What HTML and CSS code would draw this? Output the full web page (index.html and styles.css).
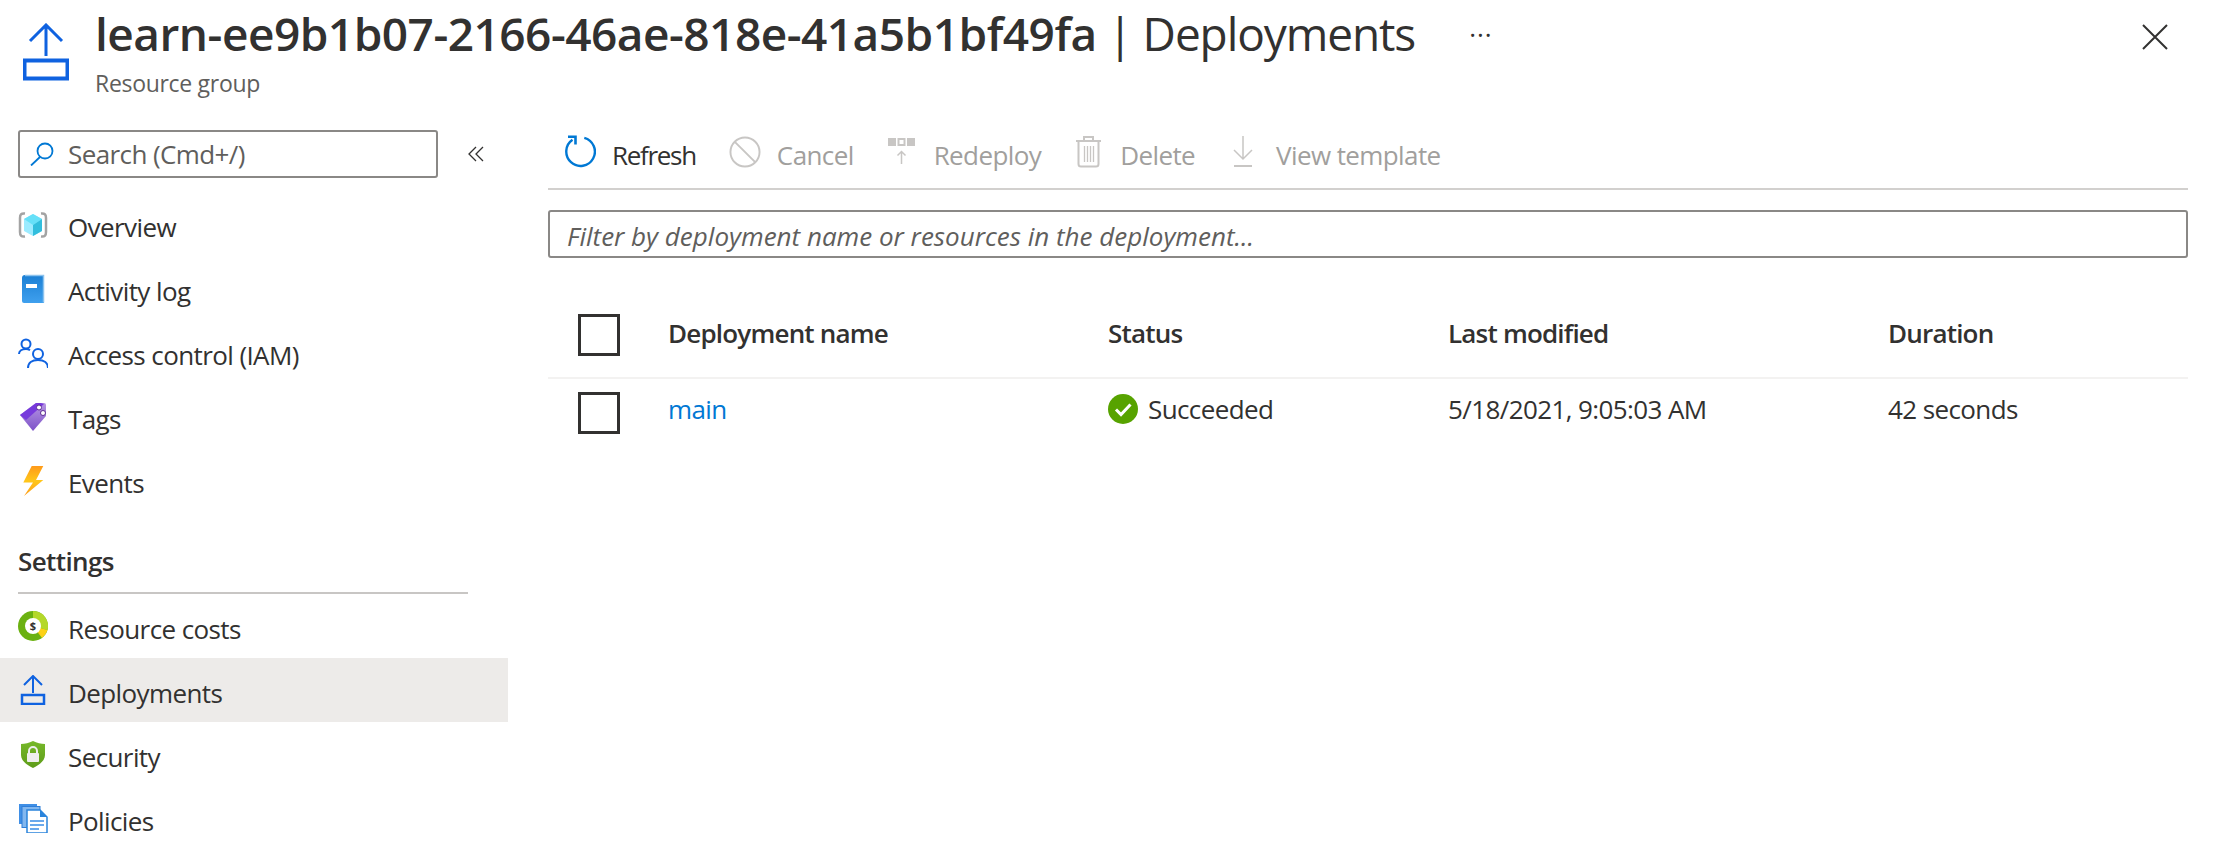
FILE: index.html
```html
<!DOCTYPE html>
<html lang="en">
<head>
   <meta charset="UTF-8">
   <title>Deployments</title>
   <link rel="stylesheet" href="styles.css">
</head>
<body class="body">
   <header class="page-header">
      <svg class="header-icon" width="46" height="58" viewBox="0 0 46 58"><path d="M23 33V2M7 18L23 2l16 16" fill="none" stroke="#0f62e0" stroke-width="3"/><rect x="1.500" y="37.500" width="43" height="18" fill="none" stroke="#0f62e0" stroke-width="4"/></svg>
      <div class="header-text">
         <h1 class="title"><b>learn-ee9b1b07-2166-46ae-818e-41a5b1bf49fa</b> | Deployments</h1>
         <div class="subtitle">Resource group</div>
      </div>
      <div class="more">···</div>
      <svg class="close" width="26" height="26" viewBox="0 0 26 26"><path d="M1 1l24 24M25 1L1 25" stroke="#323130" stroke-width="2" fill="none"/></svg>
   </header>

   <div class="layout">
      <aside class="sidebar">
         <div class="search-row">
            <div class="search-box">
               <svg width="24" height="24" viewBox="0 0 24 24"><circle cx="15" cy="9" r="7.500" fill="none" stroke="#0078d4" stroke-width="1.800"/><path d="M10 15L1 23.500" stroke="#0078d4" stroke-width="1.800"/></svg>
               <span>Search (Cmd+/)</span>
            </div>
            <svg class="collapse" width="16" height="16" viewBox="0 0 16 16"><path d="M8 1L1 8l7 7M15 1L8 8l7 7" fill="none" stroke="#323130" stroke-width="1.300"/></svg>
         </div>

         <nav class="menu">
            <a class="menu-item">
               <svg class="menu-icon" width="30" height="30" viewBox="0 0 30 30"><path d="M7 3.500C3 3 2 5 2 8v14c0 3 1 5 5 4.500M23 3.500C27 3 28 5 28 8v14c0 3-1 5-5 4.500" fill="none" stroke="#a3a3a3" stroke-width="2.500"/><path d="M15 4l9 5v12l-9 5-9-5V9z" fill="#9cebff"/><path d="M15 4l9 5-9 6-9-6z" fill="#66e0f8"/><path d="M24 9v12l-9 5V15z" fill="#32bedd"/></svg>
               <span>Overview</span>
            </a>
            <a class="menu-item">
               <svg class="menu-icon" width="30" height="30" viewBox="0 0 30 30"><defs><linearGradient id="book" x1="0" y1="0" x2="0" y2="1"><stop offset="0" stop-color="#1b7fd4"/><stop offset="1" stop-color="#3fa0ee"/></linearGradient></defs><path d="M4 4a3 3 0 0 1 3-3h19v28H6a2 2 0 0 1-2-2z" fill="url(#book)"/><path d="M7 1.500h18.500V28.500" fill="none" stroke="#8cc3ee" stroke-width="1.500"/><rect x="8" y="10" width="11" height="4" fill="#fff"/></svg>
               <span>Activity log</span>
            </a>
            <a class="menu-item">
               <svg class="menu-icon" width="30" height="30" viewBox="0 0 30 30"><g fill="none" stroke="#0f62e0" stroke-width="2"><circle cx="8" cy="6" r="4.500"/><path d="M1 16c0-3 3-5 7-5 2 0 3 .5 4 1.200"/><circle cx="20" cy="16" r="5"/><path d="M10 30c0-5 4-8 10-8s10 3 10 8"/></g></svg>
               <span>Access control (IAM)</span>
            </a>
            <a class="menu-item">
               <svg class="menu-icon" width="30" height="30" viewBox="0 0 30 30"><defs><linearGradient id="tag" x1="0" y1="0" x2="0" y2="1"><stop offset="0" stop-color="#b796e4"/><stop offset="1" stop-color="#7d52c8"/></linearGradient></defs><path d="M2 13L18 1h8a2 2 0 0 1 2 2v11L15 29z" fill="url(#tag)"/><path d="M2 13L18 1h5l3 1L8 18z" fill="#773adc"/><circle cx="21" cy="5.500" r="2.500" fill="#fff" stroke="#5c2d91"/><circle cx="25" cy="11" r="2.500" fill="#fff" stroke="#5c2d91"/></svg>
               <span>Tags</span>
            </a>
            <a class="menu-item">
               <svg class="menu-icon" width="30" height="30" viewBox="0 0 30 30"><defs><linearGradient id="bolt" x1="0" y1="0" x2="0" y2="1"><stop offset="0" stop-color="#ff9a1a"/><stop offset=".5" stop-color="#ffc71a"/><stop offset="1" stop-color="#ff9c1a"/></linearGradient></defs><path d="M13.700 0H25.300L18 14h7.300L6 30l9-13.500H5.300z" fill="url(#bolt)"/></svg>
               <span>Events</span>
            </a>
         </nav>

         <div class="menu-heading">Settings</div>
         <div class="menu-rule"></div>

         <nav class="menu menu-settings">
            <a class="menu-item">
               <svg class="menu-icon" width="30" height="30" viewBox="0 0 30 30"><circle cx="15" cy="15" r="15" fill="#6bb111"/><path d="M15 15V0a15 15 0 0 1 14.500 19z" fill="#b4d82a"/><path d="M15 15l14.500 4A15 15 0 0 1 24 27z" fill="#fcd116"/><circle cx="15" cy="15" r="8" fill="#fff"/><text class="coin" x="15" y="19" text-anchor="middle">$</text></svg>
               <span>Resource costs</span>
            </a>
            <a class="menu-item active">
               <svg class="menu-icon" width="30" height="30" viewBox="0 0 30 30"><path d="M15 18V1M6 10l9-9 9 9" fill="none" stroke="#0f62e0" stroke-width="2"/><rect x="4" y="20" width="22" height="9" fill="none" stroke="#0f62e0" stroke-width="2.500"/></svg>
               <span>Deployments</span>
            </a>
            <a class="menu-item">
               <svg class="menu-icon" width="30" height="30" viewBox="0 0 30 30"><defs><linearGradient id="shield" x1="0" y1="0" x2="0" y2="1"><stop offset="0" stop-color="#76b82a"/><stop offset="1" stop-color="#5e9c1a"/></linearGradient></defs><path d="M3 5c4 0 8-1 12-3 4 2 8 3 12 3v11c0 6-6 10-12 13C9 26 3 22 3 16z" fill="url(#shield)"/><path d="M11 14v-2a4 4 0 0 1 8 0v2" fill="none" stroke="#eeeeee" stroke-width="2"/><rect x="9" y="14" width="12" height="9" rx="1" fill="#eeeeee"/></svg>
               <span>Security</span>
            </a>
            <a class="menu-item">
               <svg class="menu-icon" width="30" height="30" viewBox="0 0 30 30"><rect x="1" y="1" width="18" height="20" fill="#3f8fe6"/><rect x="4" y="3.500" width="18" height="21" fill="#82b7ef" stroke="#2f7fd8"/><path d="M9 7h13l7 7v16H9z" fill="#fff" stroke="#2a84dc" stroke-width="1.500"/><path d="M22 7l7 7h-7z" fill="#2a84dc"/><path d="M12 18h14M12 22h14M12 26h9" stroke="#6aa9ec" stroke-width="1.800"/></svg>
               <span>Policies</span>
            </a>
         </nav>
      </aside>

      <main class="content">
         <div class="toolbar">
            <div class="tool">
               <svg width="32" height="34" viewBox="0 0 32 34"><path d="M20.300 2.800A14.300 14.300 0 1 1 8.500 4.800" fill="none" stroke="#0078d4" stroke-width="2.400"/><path d="M4 1.800h7.500V9.500" fill="none" stroke="#0078d4" stroke-width="2.600"/></svg>
               <span class="tool-on">Refresh</span>
            </div>
            <div class="tool">
               <svg width="32" height="32" viewBox="0 0 33 33"><circle cx="16.500" cy="16.500" r="15" fill="none" stroke="#c8c6c4" stroke-width="2"/><path d="M6 6l21 21" stroke="#c8c6c4" stroke-width="2"/></svg>
               <span>Cancel</span>
            </div>
            <div class="tool">
               <svg width="31" height="28" viewBox="0 0 31 28"><rect x="1" y="0" width="8" height="8" fill="#c8c6c4"/><rect x="11.500" y="1" width="6" height="6" fill="none" stroke="#c8c6c4" stroke-width="2"/><rect x="20" y="0" width="8" height="8" fill="#c8c6c4"/><path d="M14.500 26V13.500M10.500 17.500l4-4 4 4" fill="none" stroke="#c8c6c4" stroke-width="1.500"/></svg>
               <span>Redeploy</span>
            </div>
            <div class="tool">
               <svg width="30" height="33" viewBox="0 0 30 33"><path d="M2 6h25M10 6V2h9v4M4.500 6v23a2.500 2.500 0 0 0 2.500 2.500h15a2.500 2.500 0 0 0 2.500-2.500V6" fill="none" stroke="#c8c6c4" stroke-width="2"/><path d="M10.500 11v16M13.500 11v16M16.500 11v16M19.500 11v16" stroke="#c8c6c4" stroke-width="1.300"/></svg>
               <span>Delete</span>
            </div>
            <div class="tool">
               <svg width="32" height="33" viewBox="-4 0 32 33"><path d="M11 1v22M2 15l9 9 9-9" fill="none" stroke="#c8c6c4" stroke-width="1.500"/><path d="M2 31h18" stroke="#c8c6c4" stroke-width="2"/></svg>
               <span>View template</span>
            </div>
         </div>

         <div class="filter"><span>Filter by deployment name or resources in the deployment...</span></div>

         <div class="table">
            <div class="table-row table-head">
               <div class="check-cell"><div class="checkbox"></div></div>
               <div>Deployment name</div>
               <div>Status</div>
               <div>Last modified</div>
               <div>Duration</div>
            </div>
            <div class="table-row table-body">
               <div class="check-cell"><div class="checkbox"></div></div>
               <div><a class="link">main</a></div>
               <div class="status">
                  <svg width="30" height="30" viewBox="0 0 30 30"><circle cx="15" cy="15" r="15" fill="#57a300"/><path d="M8 15.500l5 5 9.500-10" fill="none" stroke="#fff" stroke-width="3"/></svg>
                  <span>Succeeded</span>
               </div>
               <div>5/18/2021, 9:05:03 AM</div>
               <div>42 seconds</div>
            </div>
         </div>
      </main>
   </div>
</body>
</html>
```

FILE: styles.css
```css
html, body { height: 100%; overflow: hidden; }

.body { margin: 0; background-color: white; color: #323130; font-family: "Open Sans", "Noto Sans", sans-serif; font-size: 26px; letter-spacing: -0.6px; }

/* header */
.page-header { display: flex; height: 115px; padding-left: 23px; padding-right: 46px; box-sizing: border-box; }
.header-icon { margin-top: 23px; flex: none; }
.header-text { margin-left: 26px; }
.title { margin: 6px 0 0; font-size: 46px; line-height: 54px; font-weight: 400; letter-spacing: -1.1px; white-space: nowrap; }
.title b { font-weight: 600; letter-spacing: -0.5px; }
.subtitle { margin-top: 8px; font-size: 23px; line-height: 30px; color: #605e5c; letter-spacing: -0.3px; }
.more { margin-left: 54px; margin-top: 12px; font-size: 26px; line-height: 44px; letter-spacing: 1px; flex: none; }
.close { margin-left: auto; margin-top: 24px; flex: none; }

.layout { display: flex; height: 733px; }

/* left menu */
.sidebar { width: 508px; flex: none; padding-top: 15px; box-sizing: border-box; }
.search-row { display: flex; align-items: center; padding-left: 18px; margin-bottom: 15px; }
.search-box { width: 420px; height: 48px; box-sizing: border-box; border: 2px solid #8a8886; border-radius: 3px; display: flex; align-items: center; padding-left: 10px; gap: 14px; color: #605e5c; }
.collapse { margin-left: 30px; }

.menu { display: flex; flex-direction: column; }
.menu-item { display: flex; align-items: center; height: 64px; padding-left: 18px; gap: 20px; }
.menu-item.active { background-color: #edebe9; }
.menu-item span { position: relative; top: 2px; }
.menu-settings .menu-item span { top: 3px; }
.menu-icon { flex: none; }
.coin { font-size: 11px; font-weight: 700; fill: #323130; letter-spacing: 0; }

.menu-heading { margin: 30px 0 0 18px; line-height: 36px; font-weight: 600; }
.menu-rule { margin: 13px 40px 0 18px; height: 2px; background-color: #c8c6c4; }

/* right content */
.content { flex: 1; padding: 0 26px 0 40px; min-width: 0; }
.toolbar { display: flex; align-items: center; height: 73px; border-bottom: 2px solid #d2d0ce; padding-left: 16px; gap: 33px; color: #a19f9d; }
.tool { display: flex; align-items: center; gap: 16px; }
.tool span { position: relative; top: 3px; }
.tool-on { color: #323130; letter-spacing: -1.3px; }

.filter { margin-top: 20px; height: 48px; box-sizing: border-box; border: 2px solid #8a8886; border-radius: 3px; display: flex; align-items: center; padding-left: 17px; font-style: italic; color: #605e5c; letter-spacing: 0; }
.filter span { position: relative; top: 2px; }

.table { margin-top: 32px; }
.table-row { display: grid; grid-template-columns: 120px 440px 340px 440px 1fr; align-items: center; height: 62px; box-sizing: border-box; padding-bottom: 2px; }
.table-head { height: 89px; font-weight: 600; letter-spacing: -0.8px; border-bottom: 2px solid #f3f2f1; }
.check-cell { padding-left: 30px; }
.table-head .check-cell { padding-top: 4px; }
.table-body .check-cell { padding-top: 8px; }
.checkbox { width: 42px; height: 42px; box-sizing: border-box; border: 3px solid #323130; }
.link { color: #0078d4; }
.status { display: flex; align-items: center; gap: 10px; }
```
